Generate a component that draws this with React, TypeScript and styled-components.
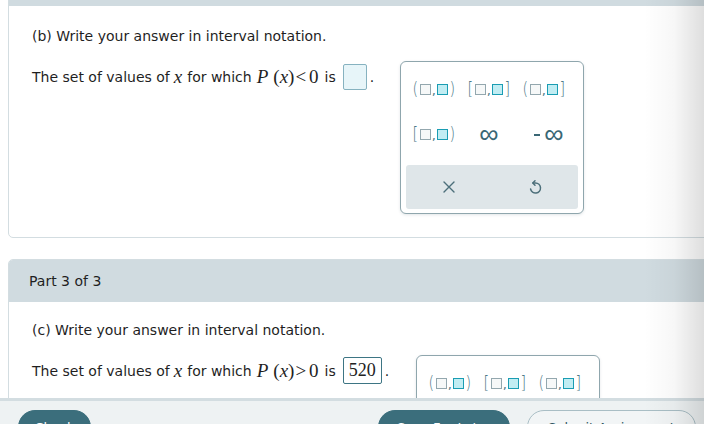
import React from 'react';
import styled, { createGlobalStyle } from 'styled-components';

const Global = createGlobalStyle`
  html, body {
    margin: 0;
    padding: 0;
    background: #fff;
  }
  body {
    font-family: 'DejaVu Sans', Verdana, sans-serif;
    color: #1f1f1f;
  }
`;

const Page = styled.div`
  position: relative;
  width: 704px;
  height: 424px;
  overflow: hidden;
  display: flex;
  flex-direction: column;
`;

const Scroller = styled.div`
  height: 398px;
  overflow: hidden;
  flex-shrink: 0;
`;

const List = styled.div`
  margin-top: -37px;
  padding-left: 8px;
  display: flex;
  flex-direction: column;
  gap: 21px;
`;

const Card = styled.section`
  width: 720px;
  border: 1px solid #d3dde1;
  border-radius: 5px;
  background: #fff;
  box-sizing: border-box;
`;

const CardHeader = styled.div`
  height: 42px;
  padding-left: 20px;
  display: flex;
  align-items: center;
  background: #d0dbe0;
  font-size: 14px;
  border-radius: 4px 4px 0 0;
`;

const CardBody = styled.div<{ $top: number; $bottom: number }>`
  padding: ${p => p.$top}px 0 ${p => p.$bottom}px 23px;
`;

const Prompt = styled.p`
  margin: 0 0 15px;
  font-size: 14px;
  line-height: 20px;
`;

const AnswerRow = styled.div`
  display: flex;
  align-items: flex-start;
`;

const Sentence = styled.div`
  display: flex;
  align-items: center;
  height: 27px;
  margin-top: 2px;
  font-size: 14px;
  white-space: nowrap;
`;

const MathVar = styled.span`
  font-family: 'Liberation Serif', 'Times New Roman', serif;
  font-style: italic;
  font-size: 19px;
  margin: 0 5px 0 4px;
`;

const MathExpr = styled.span`
  font-family: 'Liberation Serif', 'Times New Roman', serif;
  font-size: 19px;
  margin: 0 6px 0 5px;
  i {
    font-style: italic;
  }
  i:first-child {
    margin-right: 5px;
  }
  b {
    font-weight: normal;
    margin: 0 3px 0 1px;
  }
`;

const AnswerBox = styled.span<{ $filled?: boolean }>`
  display: inline-flex;
  align-items: center;
  justify-content: center;
  box-sizing: border-box;
  min-width: 24px;
  height: ${p => (p.$filled ? 27 : 26)}px;
  padding: 0 5px;
  margin-left: 7px;
  border: 1px solid ${p => (p.$filled ? '#3d7584' : '#86b2c0')};
  border-radius: 2px;
  background: ${p => (p.$filled ? '#fff' : '#e7f5f9')};
  font-family: 'Liberation Serif', 'Times New Roman', serif;
  font-size: 18px;
  color: #222;
`;

const Period = styled.span`
  margin-left: 3px;
  align-self: flex-end;
  padding-bottom: 5px;
`;

const Palette = styled.div<{ $ml: number }>`
  margin-left: ${p => p.$ml}px;
  width: 184px;
  box-sizing: border-box;
  border: 1px solid #8fa6ad;
  border-radius: 6px;
  background: #fff;
  padding: 5px 5px 4px;
  box-shadow: 0 1px 3px rgba(60, 90, 100, 0.15);
`;

const KeyGrid = styled.div`
  display: grid;
  grid-template-columns: repeat(3, 55px);
  grid-auto-rows: 45px;
`;

const Key = styled.div<{ $shift?: number }>`
  display: flex;
  align-items: center;
  justify-content: center;
  padding-left: ${p => p.$shift ?? 0}px;
  color: #45707d;
`;

const Bracket = styled.span`
  font-family: 'DejaVu Sans', sans-serif;
  font-weight: 300;
  font-size: 17px;
  line-height: 1;
  color: #4d7a88;
  transform: scaleX(0.85);
`;

const Slot = styled.span<{ $active?: boolean }>`
  display: inline-block;
  width: 9px;
  height: 9px;
  border: 1.5px solid ${p => (p.$active ? '#1a9db3' : '#93a7ae')};
  background: ${p => (p.$active ? '#c1edf3' : '#f6f8f8')};
  margin: 0 1px;
`;

const Comma = styled.span`
  font-size: 13px;
  color: #4d7a88;
  align-self: flex-end;
  margin-bottom: 14px;
`;

const Inf = styled.span`
  font-family: 'Liberation Sans', Arial, sans-serif;
  font-size: 27px;
  line-height: 1;
  color: #3a6775;
`;

const Minus = styled.span`
  display: inline-block;
  width: 6px;
  height: 2px;
  background: #3a6775;
  margin-right: 4px;
`;

const ToolBar = styled.div`
  margin-top: 8px;
  height: 44px;
  border-radius: 3px;
  background: #dfe6e9;
  display: grid;
  grid-template-columns: 1fr 1fr;
  align-items: center;
  justify-items: center;
  color: #4c6f7a;
`;

const Footer = styled.footer`
  flex: 1;
  border-top: 3px solid #d3dde1;
  background: #eef2f3;
  display: flex;
  align-items: flex-start;
  padding: 9px 8px 0 18px;
  gap: 17px;
  overflow: hidden;
`;

const FootButton = styled.div<{ $outline?: boolean; $w: number }>`
  width: ${p => p.$w}px;
  height: 34px;
  flex-shrink: 0;
  box-sizing: border-box;
  border-radius: 17px;
  border: 1px solid ${p => (p.$outline ? '#a9bec5' : '#3b6e7c')};
  background: ${p => (p.$outline ? '#f2f5f6' : '#3b6e7c')};
  color: ${p => (p.$outline ? '#2f5561' : '#fff')};
  font-size: 13px;
  white-space: nowrap;
  display: flex;
  align-items: center;
  justify-content: center;
`;

const Spacer = styled.div`
  flex: 1;
`;

const EdgeShade = styled.div`
  position: absolute;
  top: 0;
  right: 0;
  width: 60px;
  height: 100%;
  pointer-events: none;
  background: linear-gradient(to right, rgba(0, 0, 0, 0), rgba(0, 0, 0, 0.03) 50%, rgba(0, 0, 0, 0.13));
`;

const Interval = ({ open, close }: { open: string; close: string }) => (
  <Key>
    <Bracket>{open}</Bracket>
    <Slot />
    <Comma>,</Comma>
    <Slot $active />
    <Bracket>{close}</Bracket>
  </Key>
);

const CloseIcon = () => (
  <svg width="14" height="14" viewBox="0 0 14 14" fill="none" stroke="currentColor" strokeWidth="1.4" strokeLinecap="round">
    <path d="M2 2 L12 12 M12 2 L2 12" />
  </svg>
);

const UndoIcon = () => (
  <svg width="14" height="16" viewBox="0 0 14 16" fill="none" stroke="currentColor" strokeWidth="1.5" strokeLinecap="round" strokeLinejoin="round">
    <path d="M5 4 H7.5 A5 5 0 1 1 2.6 10" />
    <path d="M7 1.8 L4.8 4 L7 6.2" />
  </svg>
);

const KeyPad = ({ ml }: { ml: number }) => (
  <Palette $ml={ml}>
    <KeyGrid>
      <Interval open="(" close=")" />
      <Interval open="[" close="]" />
      <Interval open="(" close="]" />
      <Interval open="[" close=")" />
      <Key>
        <Inf>∞</Inf>
      </Key>
      <Key $shift={10}>
        <Minus />
        <Inf>∞</Inf>
      </Key>
    </KeyGrid>
    <ToolBar>
      <CloseIcon />
      <UndoIcon />
    </ToolBar>
  </Palette>
);

export default function App() {
  return (
    <Page>
      <Global />
      <Scroller>
        <List>
          <Card>
            <CardHeader>Part 2 of 3</CardHeader>
            <CardBody $top={20} $bottom={23}>
              <Prompt>(b) Write your answer in interval notation.</Prompt>
              <AnswerRow>
                <Sentence>
                  The set of values of<MathVar>x</MathVar>for which
                  <MathExpr>
                    <i>P</i>(<i>x</i>)<b>&lt;</b>0
                  </MathExpr>
                  is
                  <AnswerBox />
                  <Period>.</Period>
                </Sentence>
                <KeyPad ml={26} />
              </AnswerRow>
            </CardBody>
          </Card>
          <Card>
            <CardHeader>Part 3 of 3</CardHeader>
            <CardBody $top={18} $bottom={60}>
              <Prompt>(c) Write your answer in interval notation.</Prompt>
              <AnswerRow>
                <Sentence>
                  The set of values of<MathVar>x</MathVar>for which
                  <MathExpr>
                    <i>P</i>(<i>x</i>)<b>&gt;</b>0
                  </MathExpr>
                  is
                  <AnswerBox $filled>520</AnswerBox>
                  <Period>.</Period>
                </Sentence>
                <KeyPad ml={27} />
              </AnswerRow>
            </CardBody>
          </Card>
        </List>
      </Scroller>
      <Footer>
        <FootButton $w={73}>Check</FootButton>
        <Spacer />
        <FootButton $w={132}>Save For Later</FootButton>
        <FootButton $w={169} $outline>
          Submit Assignment
        </FootButton>
      </Footer>
      <EdgeShade />
    </Page>
  );
}
